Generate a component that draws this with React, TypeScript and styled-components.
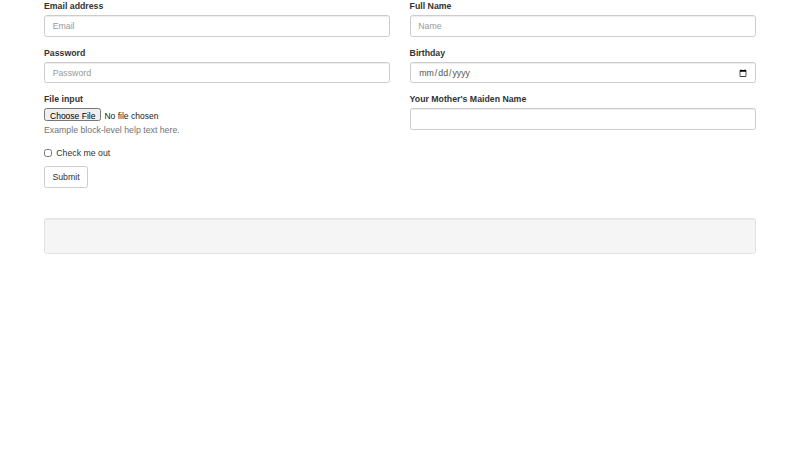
import styled, { createGlobalStyle } from "styled-components"

const GlobalStyle = createGlobalStyle`
  html, body {
    margin: 0;
    padding: 0;
    background: #fff;
  }
  body {
    font-family: "Liberation Sans", Arial, sans-serif;
    font-size: 8.75px;
    line-height: 12.8px;
    color: #333;
  }
  * {
    box-sizing: border-box;
  }
`

function App() {
  return (
    <Page>
      <GlobalStyle />
      <FormGrid>
        <Column>
          <Group>
            <Label htmlFor="email">Email address</Label>
            <Input id="email" type="email" placeholder="Email" />
          </Group>
          <Group>
            <Label htmlFor="password">Password</Label>
            <Input id="password" type="password" placeholder="Password" />
          </Group>
          <Group>
            <Label htmlFor="file">File input</Label>
            <FileInput id="file" type="file" />
            <HelpText>Example block-level help text here.</HelpText>
          </Group>
          <CheckRow>
            <CheckLabel>
              <CheckBox type="checkbox" /> Check me out
            </CheckLabel>
          </CheckRow>
          <Button type="submit">Submit</Button>
        </Column>
        <Column>
          <Group>
            <Label htmlFor="fullname">Full Name</Label>
            <Input id="fullname" type="text" placeholder="Name" />
          </Group>
          <Group>
            <Label htmlFor="birthday">Birthday</Label>
            <Input id="birthday" type="date" />
          </Group>
          <Group>
            <Label htmlFor="maiden">Your Mother's Maiden Name</Label>
            <Input id="maiden" type="text" />
          </Group>
        </Column>
      </FormGrid>
      <Well />
    </Page>
  )
}

export default App

const Page = styled.div`
  padding: 0 44px;
`

const FormGrid = styled.form`
  display: grid;
  grid-template-columns: 1fr 1fr;
  column-gap: 19.2px;
  align-items: start;
`

const Column = styled.div`
  display: flex;
  flex-direction: column;
  align-items: stretch;
`

const Group = styled.div`
  margin-bottom: 9.6px;
`

const Label = styled.label`
  display: block;
  font-weight: bold;
  line-height: 12px;
  margin-bottom: 3.2px;
`

const Input = styled.input`
  display: block;
  width: 100%;
  height: 21.76px;
  padding: 3.84px 7.68px;
  font-family: inherit;
  font-size: 8.75px;
  color: #555;
  background: #fff;
  border: 1px solid #ccc;
  border-radius: 2.56px;
  box-shadow: inset 0 1px 1px rgba(0, 0, 0, 0.075);
  outline: none;

  &::placeholder {
    color: #999;
  }

  &::-webkit-calendar-picker-indicator {
    width: 8px;
    height: 8px;
    padding: 0;
    margin: 0;
  }
`

const FileInput = styled.input`
  display: block;
  height: 13px;
  font-family: inherit;
  font-size: 8.53px;
  color: #222;

  &::file-selector-button {
    font-family: inherit;
    font-size: 8.53px;
    padding: 1px 4px;
    margin-right: 3px;
    height: 13px;
  }
`

const HelpText = styled.span`
  display: block;
  margin-top: 3.2px;
  color: #737373;
`

const CheckRow = styled.div`
  margin: 0 0 6.4px;
`

const CheckLabel = styled.label`
  display: flex;
  align-items: center;
  gap: 4px;
  line-height: 12.8px;
`

const CheckBox = styled.input`
  width: 8.3px;
  height: 8.3px;
  margin: 0;
`

const Button = styled.button`
  align-self: flex-start;
  height: 21.76px;
  padding: 3.84px 7.4px;
  font-family: inherit;
  font-size: 8.75px;
  color: #333;
  background: #fff;
  border: 1px solid #ccc;
  border-radius: 2.56px;
  cursor: pointer;
`

const Well = styled.div`
  margin-top: 30px;
  height: 36.4px;
  background: #f5f5f5;
  border: 1px solid #e3e3e3;
  border-radius: 2.56px;
  box-shadow: inset 0 1px 1px rgba(0, 0, 0, 0.05);
`
